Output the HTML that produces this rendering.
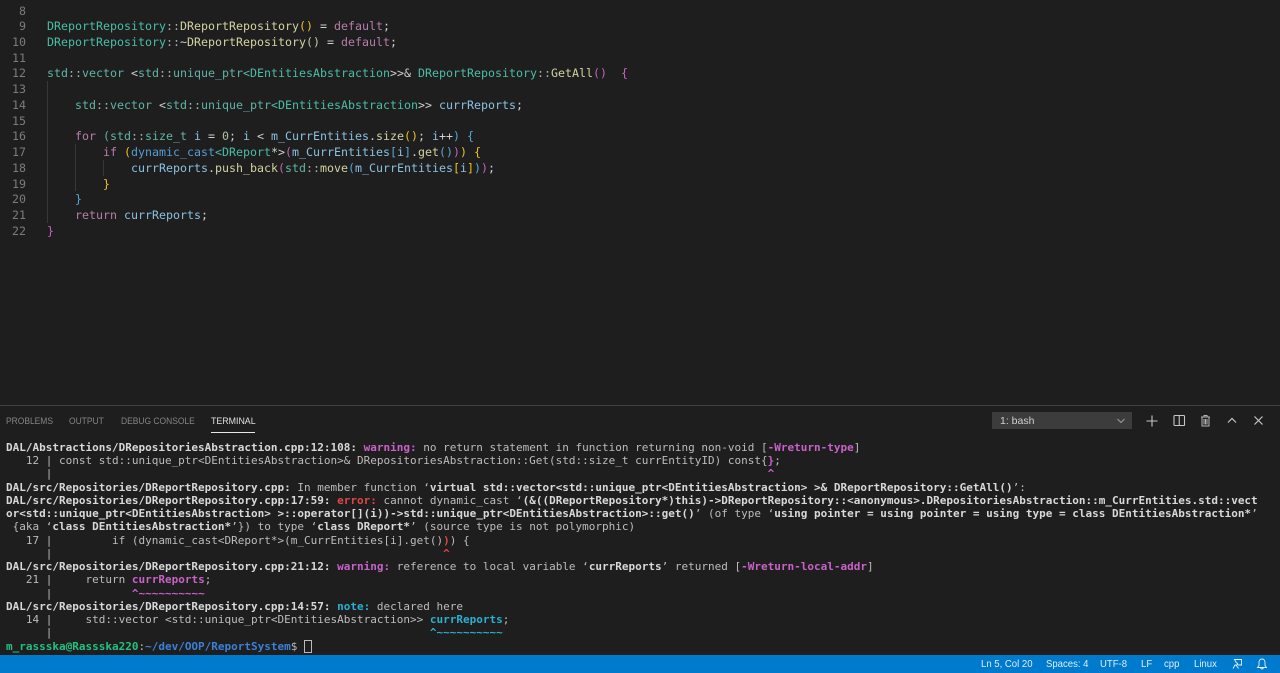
<!DOCTYPE html>
<html><head><meta charset="utf-8"><style>
html,body{margin:0;padding:0;width:1280px;height:673px;overflow:hidden;background:#1e1e1e}
.l{position:absolute;white-space:pre;margin:0;font-family:"DejaVu Sans Mono","Liberation Mono",monospace}
#ed .l{font-size:11.63px;line-height:16px;left:47px;color:#d0d0d0}
#ed .n{left:0;width:26px;text-align:right;color:#7c7c7c}
#tm .l{font-size:11px;line-height:13px;left:6px;color:#bcbcbc}
#ed{filter:blur(.3px)}
#tm{filter:blur(.3px)}
b{font-weight:bold;color:#d8d8d8}
.c{color:#4abda7}.d{color:#60b3a6}.q{color:#9ab2ad}.k{color:#b67daa}.v{color:#8cc0e0}.f{color:#d2d2a5}.bl{color:#569cd6}.y{color:#eec21e}.p{color:#c266bd}.s{color:#55a8da}.m{color:#aec3a0}
b.w{color:#c862c8}b.e{color:#e04545}b.o{color:#29b0d0}b.gr{color:#23c080}b.u{color:#3b80d8}
.t{position:absolute;font-family:"Liberation Sans",sans-serif;white-space:pre;filter:blur(.25px);transform-origin:left center}
.tab{font-size:9.2px;top:415px;color:#858585;line-height:12px;transform:scaleX(.92)}
.st{font-size:10.5px;top:658px;color:#e0eef8;line-height:12px;transform:scaleX(.91)}
.guide{position:absolute;width:1px;background:#383838}
svg{position:absolute}
</style></head><body>
<div class="guide" style="left:47px;top:81px;height:142px"></div>
<div class="guide" style="left:75px;top:144px;height:47px"></div>
<div class="guide" style="left:103px;top:160px;height:16px"></div>
<div id="ed">
<div class="l n" style="top:3px">8</div>
<div class="l n" style="top:18px">9</div>
<div class="l n" style="top:34px">10</div>
<div class="l n" style="top:50px">11</div>
<div class="l n" style="top:65px">12</div>
<div class="l n" style="top:81px">13</div>
<div class="l n" style="top:97px">14</div>
<div class="l n" style="top:113px">15</div>
<div class="l n" style="top:128px">16</div>
<div class="l n" style="top:144px">17</div>
<div class="l n" style="top:160px">18</div>
<div class="l n" style="top:176px">19</div>
<div class="l n" style="top:191px">20</div>
<div class="l n" style="top:207px">21</div>
<div class="l n" style="top:223px">22</div>
<div class="l" style="top:18px"><span class="c">DReportRepository</span><span class="q">::</span><span class="f">DReportRepository</span><span class="y">()</span> = <span class="k">default</span>;</div>
<div class="l" style="top:34px"><span class="c">DReportRepository</span><span class="q">::</span>~<span class="f">DReportRepository</span><span style="color:#c8c8b0">()</span> = <span class="k">default</span>;</div>
<div class="l" style="top:65px"><span class="d">std</span><span class="q">::</span><span class="d">vector</span> &lt;<span class="d">std</span><span class="q">::</span><span class="d">unique_ptr</span><span class="c">&lt;DEntitiesAbstraction</span>&gt;&gt;&amp; <span class="c">DReportRepository</span><span class="q">::</span><span class="f">GetAll</span><span class="p">()</span>  <span class="p">{</span></div>
<div class="l" style="top:97px">    <span class="d">std</span><span class="q">::</span><span class="d">vector</span> &lt;<span class="d">std</span><span class="q">::</span><span class="d">unique_ptr</span><span class="c">&lt;DEntitiesAbstraction</span>&gt;&gt; <span class="v">currReports</span>;</div>
<div class="l" style="top:128px">    <span class="k">for</span> <span class="d">(std</span><span class="q">::</span><span class="d">size_t</span> <span class="v">i</span> = <span class="m">0</span>; <span class="v">i</span> &lt; <span class="v">m_CurrEntities</span>.<span class="f">size</span><span class="y">()</span>; <span class="v">i</span>++<span class="s">)</span> <span class="s">{</span></div>
<div class="l" style="top:144px">        <span class="k">if</span> <span class="y">(</span><span class="bl">dynamic_cast</span><span class="c">&lt;DReport</span>*&gt;<span class="p">(</span><span class="v">m_CurrEntities</span><span class="s">[</span><span class="v">i</span><span class="s">]</span>.<span class="f">get</span><span class="s">()</span><span class="p">)</span><span class="y">)</span> <span class="y">{</span></div>
<div class="l" style="top:160px">            <span class="v">currReports</span>.<span class="f">push_back</span><span class="p">(</span><span class="d">std</span><span class="q">::</span><span class="f">move</span><span class="s">(</span><span class="v">m_CurrEntities</span><span class="y">[</span><span class="v">i</span><span class="y">]</span><span class="s">)</span><span class="p">)</span>;</div>
<div class="l" style="top:176px">        <span class="y">}</span></div>
<div class="l" style="top:191px">    <span class="s">}</span></div>
<div class="l" style="top:207px">    <span class="k">return</span> <span class="v">currReports</span>;</div>
<div class="l" style="top:223px"><span class="p">}</span></div>
</div>

<div style="position:absolute;left:0;top:405px;width:1280px;height:1px;background:#414141"></div>
<div class="t tab" style="left:6px">PROBLEMS</div>
<div class="t tab" style="left:69px">OUTPUT</div>
<div class="t tab" style="left:121px">DEBUG CONSOLE</div>
<div class="t tab" style="left:211px;color:#e0e0e0;transform:scaleX(.96)">TERMINAL</div>
<div style="position:absolute;left:211px;top:432px;width:44px;height:1px;background:#e7e7e7"></div>

<div style="position:absolute;left:992px;top:412px;width:140px;height:17px;background:#3c3c3c"></div>
<div class="t" style="left:1000px;top:415px;font-size:10.5px;line-height:13px;color:#d0d0d0">1: bash</div>
<svg style="left:1116px;top:417px" width="10" height="8" viewBox="0 0 10 8"><path d="M1.5 2 5 5.5 8.500 2" fill="none" stroke="#999" stroke-width="1.100"/></svg>
<svg style="left:1145px;top:414px" width="14" height="14" viewBox="0 0 14 14"><path d="M7 1.500V12.500M1.500 7H12.500" fill="none" stroke="#c5c5c5" stroke-width="1.100"/></svg>
<svg style="left:1173px;top:414px" width="13" height="13" viewBox="0 0 13 13"><rect x="1" y="1.500" width="10.500" height="10" rx=".8" fill="none" stroke="#c5c5c5" stroke-width="1.100"/><path d="M6.250 1.500V11.500" stroke="#c5c5c5" stroke-width="1.100"/></svg>
<svg style="left:1199px;top:414px" width="13" height="13" viewBox="0 0 13 13"><path d="M2 3H11M5 3V1.500H8V3M3 3.500V12H10V3.500M5 5V10.500M6.500 5V10.500M8 5V10.500" fill="none" stroke="#b5b5b5" stroke-width="1"/></svg>
<svg style="left:1226px;top:416px" width="12" height="9" viewBox="0 0 12 9"><path d="M2 6.500 6 2.500 10 6.500" fill="none" stroke="#c5c5c5" stroke-width="1.200"/></svg>
<svg style="left:1253px;top:415px" width="11" height="11" viewBox="0 0 11 11"><path d="M1.500 1.500 9.500 9.500M9.500 1.500 1.500 9.500" fill="none" stroke="#c5c5c5" stroke-width="1.200"/></svg>

<div id="tm">
<div class="l" style="top:441px"><b>DAL/Abstractions/DRepositoriesAbstraction.cpp:12:108:</b> <b class="w">warning:</b> no return statement in function returning non-void [<b class="w">-Wreturn-type</b>]</div>
<div class="l" style="top:454px">   12 | const std::unique_ptr&lt;DEntitiesAbstraction&gt;&amp; DRepositoriesAbstraction::Get(std::size_t currEntityID) const{<b class="w">}</b>;</div>
<div class="l" style="top:467px">      |                                                                                                            <b class="w">^</b></div>
<div class="l" style="top:481px"><b>DAL/src/Repositories/DReportRepository.cpp:</b> In member function ‘<b>virtual std::vector&lt;std::unique_ptr&lt;DEntitiesAbstraction&gt; &gt;&amp; DReportRepository::GetAll()</b>’:</div>
<div class="l" style="top:494px"><b>DAL/src/Repositories/DReportRepository.cpp:17:59:</b> <b class="e">error: </b>cannot dynamic_cast ‘<b>(&amp;((DReportRepository*)this)-&gt;DReportRepository::&lt;anonymous&gt;.DRepositoriesAbstraction::m_CurrEntities.std::vect</b></div>
<div class="l" style="top:507px"><b>or&lt;std::unique_ptr&lt;DEntitiesAbstraction&gt; &gt;::operator[](i))-&gt;std::unique_ptr&lt;DEntitiesAbstraction&gt;::get()</b>’ (of type ‘<b>using pointer = using pointer = using type = class DEntitiesAbstraction*</b>’</div>
<div class="l" style="top:520px"> {aka ‘<b>class DEntitiesAbstraction*</b>’}) to type ‘<b>class DReport*</b>’ (source type is not polymorphic)</div>
<div class="l" style="top:534px">   17 |         if (dynamic_cast&lt;DReport*&gt;(m_CurrEntities[i].get()<b class="e">)</b>) {</div>
<div class="l" style="top:547px">      |                                                           <b class="e">^</b></div>
<div class="l" style="top:560px"><b>DAL/src/Repositories/DReportRepository.cpp:21:12:</b> <b class="w">warning: </b>reference to local variable ‘<b>currReports</b>’ returned [<b class="w">-Wreturn-local-addr</b>]</div>
<div class="l" style="top:573px">   21 |     return <b class="w">currReports</b>;</div>
<div class="l" style="top:587px">      |            <b class="w">^~~~~~~~~~~</b></div>
<div class="l" style="top:600px"><b>DAL/src/Repositories/DReportRepository.cpp:14:57:</b> <b class="o">note: </b>declared here</div>
<div class="l" style="top:613px">   14 |     std::vector &lt;std::unique_ptr&lt;DEntitiesAbstraction&gt;&gt; <b class="o">currReports</b>;</div>
<div class="l" style="top:626px">      |                                                         <b class="o">^~~~~~~~~~~</b></div>
<div class="l" style="top:640px"><b class="gr">m_rassska@Rassska220</b>:<b class="u">~/dev/OOP/ReportSystem</b>$ </div>
</div>
<div style="position:absolute;left:304px;top:640px;width:6px;height:11px;border:1px solid #bbb"></div>

<div style="position:absolute;left:0;top:655px;width:1280px;height:18px;background:#007acc"></div>
<div class="t st" style="left:981px">Ln 5, Col 20</div>
<div class="t st" style="left:1046px">Spaces: 4</div>
<div class="t st" style="left:1100px">UTF-8</div>
<div class="t st" style="left:1141px">LF</div>
<div class="t st" style="left:1164px">cpp</div>
<div class="t st" style="left:1194px">Linux</div>
<svg style="left:1231px;top:658px" width="12" height="12" viewBox="0 0 12 12"><path d="M3 1.500H10.500V7H7M3.500 1.500 5.500 5M5.500 5C7 5 7 7 5.500 7H4L2 10.500M5 7 7.500 10.500" fill="none" stroke="#e8f3fb" stroke-width=".9"/></svg>
<svg style="left:1256px;top:658px" width="12" height="12" viewBox="0 0 12 12"><path d="M6 1C3.800 1 3 2.800 3 4.500V7.500L1.500 9.500H10.500L9 7.500V4.500C9 2.800 8.200 1 6 1ZM4.800 10C4.800 11.300 7.200 11.300 7.200 10" fill="none" stroke="#e8f3fb" stroke-width=".9"/></svg>
</body></html>
